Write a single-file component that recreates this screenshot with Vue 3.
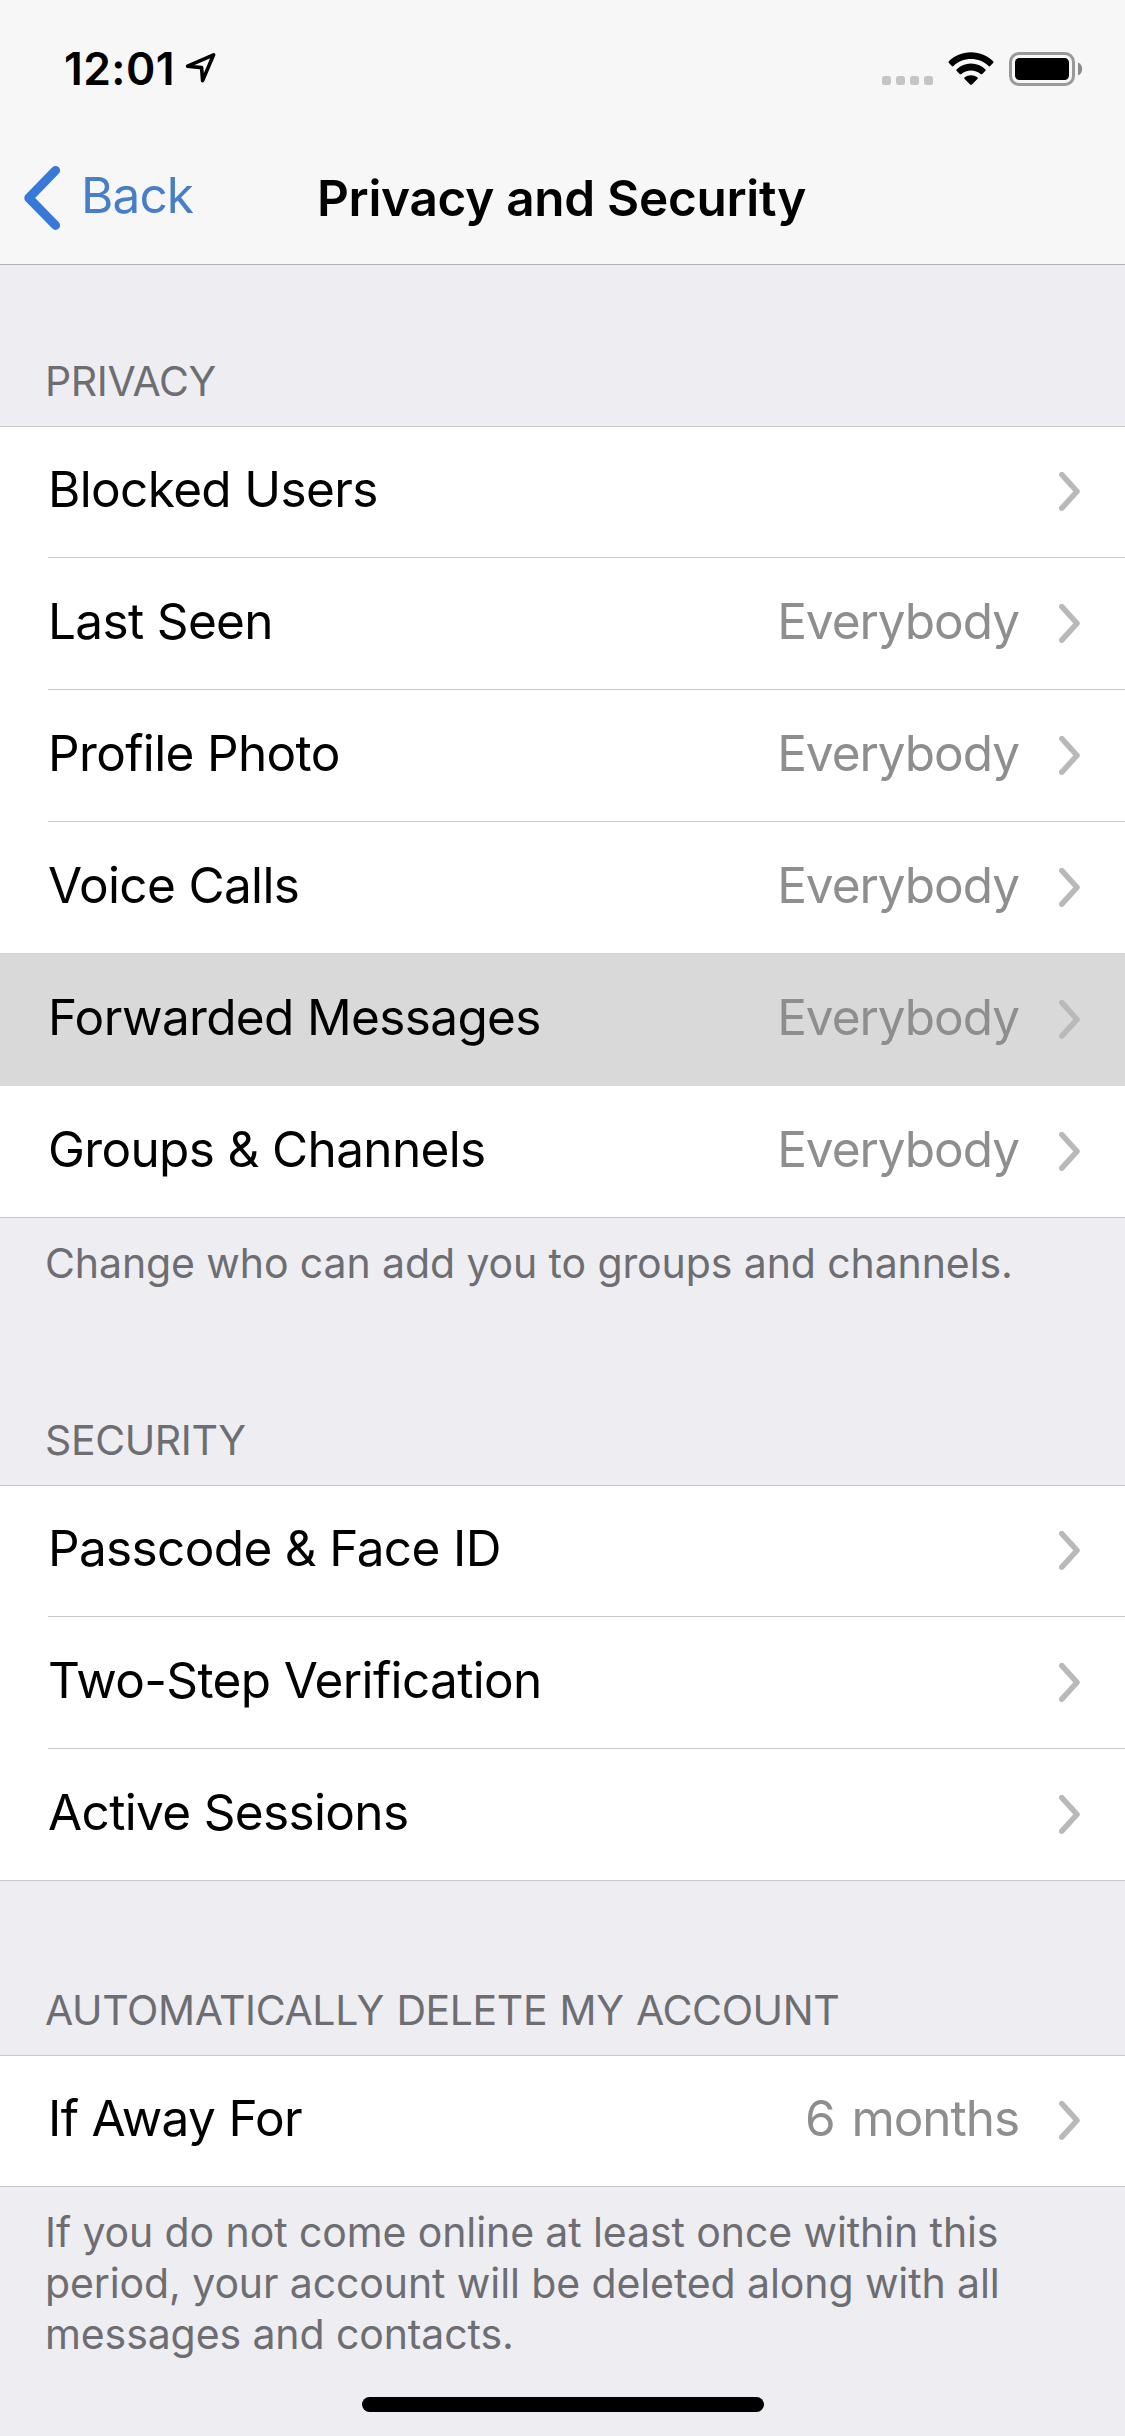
<template>
  <div class="screen">
    <header class="header">
      <div class="status-bar">
        <div class="status-left">
          <span class="time">12:01</span>
          <svg class="location-icon" width="32" height="32" viewBox="0 0 32 32">
            <path d="M2.6 14.2 28.6 2.8 17.6 28.6 16.6 15.6Z" />
          </svg>
        </div>
        <div class="status-right">
          <div class="signal">
            <span v-for="n in 4" :key="n" class="signal-dot"></span>
          </div>
          <svg class="wifi-icon" width="46" height="34" viewBox="0 0 46 34">
            <path d="M23 0.3C31.8 0.3 39.6 3.8 45.1 9.3 45.7 9.9 45.7 10.5 45.1 11.1L42.2 14C41.7 14.5 41 14.5 40.5 14 36 9.7 29.8 7.1 23 7.1S10 9.7 5.5 14C5 14.5 4.3 14.5 3.8 14L0.9 11.1C0.3 10.5 0.3 9.9 0.9 9.3 6.4 3.8 14.2 0.3 23 0.3Z" />
            <path d="M23 11.6C28.5 11.6 33.5 13.7 37.2 17.2 37.8 17.8 37.8 18.4 37.2 19L34.3 21.9C33.8 22.4 33.1 22.4 32.6 21.9 30.1 19.7 26.7 18.4 23 18.4S15.9 19.7 13.4 21.9C12.9 22.4 12.2 22.4 11.7 21.9L8.8 19C8.2 18.4 8.2 17.8 8.8 17.2 12.5 13.7 17.5 11.6 23 11.6Z" />
            <path d="M23 23.2C25.4 23.2 27.6 24 29.3 25.3 29.9 25.8 29.9 26.5 29.4 27L23.9 32.6C23.4 33.1 22.6 33.1 22.1 32.6L16.6 27C16.1 26.5 16.1 25.8 16.7 25.3 18.4 24 20.6 23.2 23 23.2Z" />
          </svg>
          <svg class="battery-icon" width="74" height="34" viewBox="0 0 74 34">
            <rect class="battery-case" x="1.5" y="1.5" width="63" height="31" rx="8.5" />
            <rect x="6" y="6" width="54" height="22" rx="4.5" />
            <path class="battery-cap" d="M69 10.6C71.6 11.6 73.2 14 73.2 17S71.6 22.4 69 23.4Z" />
          </svg>
        </div>
      </div>

      <nav class="nav-bar">
        <button class="back-btn">
          <svg width="38" height="66" viewBox="0 0 38 66">
            <path d="M32.6 5.4 5.8 33 32.6 60.4" />
          </svg>
          <span>Back</span>
        </button>
        <h1 class="title">Privacy and Security</h1>
      </nav>
    </header>

    <main class="content">
      <section v-for="section in sections" :key="section.title" class="section">
        <h2 class="section-title">{{ section.title }}</h2>
        <ul class="list">
          <li
            v-for="item in section.items"
            :key="item.label"
            class="row"
            :class="{ pressed: pressedItem === item.label }"
            @click="pressedItem = item.label"
          >
            <span class="label">{{ item.label }}</span>
            <span v-if="item.value" class="value">{{ item.value }}</span>
            <svg class="chevron" width="22" height="40" viewBox="0 0 22 40">
              <path d="M2.8 2.6 18 19.4 2.8 36.2" />
            </svg>
          </li>
        </ul>
        <p v-if="section.note" class="note">{{ section.note }}</p>
      </section>
    </main>

    <div class="home-indicator"></div>
  </div>
</template>

<script setup>
import { ref } from 'vue'

const pressedItem = ref('Forwarded Messages')

const sections = [
  {
    title: 'PRIVACY',
    items: [
      { label: 'Blocked Users' },
      { label: 'Last Seen', value: 'Everybody' },
      { label: 'Profile Photo', value: 'Everybody' },
      { label: 'Voice Calls', value: 'Everybody' },
      { label: 'Forwarded Messages', value: 'Everybody' },
      { label: 'Groups & Channels', value: 'Everybody' }
    ],
    note: 'Change who can add you to groups and channels.'
  },
  {
    title: 'SECURITY',
    items: [
      { label: 'Passcode & Face ID' },
      { label: 'Two-Step Verification' },
      { label: 'Active Sessions' }
    ]
  },
  {
    title: 'AUTOMATICALLY DELETE MY ACCOUNT',
    items: [{ label: 'If Away For', value: '6 months' }],
    note: 'If you do not come online at least once within this period, your account will be deleted along with all messages and contacts.'
  }
]
</script>

<style>
body {
  margin: 0;
  background: #eeedf2;
}
</style>

<style scoped>
.screen {
  display: flex;
  flex-direction: column;
  box-sizing: border-box;
  width: 1125px;
  height: 2436px;
  overflow: hidden;
  background: #eeedf2;
  color: #000;
  font-family: Inter, 'Liberation Sans', sans-serif;
}

.header {
  box-sizing: border-box;
  height: 265px;
  flex-shrink: 0;
  background: #f7f7f7;
  border-bottom: 1px solid #b2b2b4;
}

.status-bar {
  display: flex;
  justify-content: space-between;
  height: 132px;
  padding: 0 42px 0 64px;
}

.status-left {
  display: flex;
  align-items: flex-start;
  gap: 10px;
}

.time {
  padding-top: 40px;
  font-size: 44.5px;
  font-weight: 600;
  line-height: 58px;
  letter-spacing: 0.4px;
}

.location-icon {
  margin-top: 52px;
  fill: none;
  stroke: #000;
  stroke-width: 3.6;
  stroke-linejoin: round;
}

.status-right {
  display: flex;
  align-items: flex-start;
  padding-top: 52px;
}

.signal {
  display: flex;
  gap: 5px;
  margin-top: 24px;
}

.signal-dot {
  width: 9px;
  height: 9px;
  border-radius: 2.5px;
  background: #c5c5c5;
}

.wifi-icon {
  margin-left: 15px;
}

.battery-icon {
  margin-left: 15px;
}

.battery-case {
  fill: none;
  stroke: #999;
  stroke-width: 3;
}

.battery-cap {
  fill: #8c8c8c;
}

.nav-bar {
  display: grid;
  grid-template-columns: 1fr auto 1fr;
  align-items: start;
  height: 132px;
}

.back-btn {
  display: flex;
  align-items: flex-start;
  gap: 20px;
  padding: 33px 0 0 23px;
  border: none;
  background: none;
  color: #467fc8;
  font-family: inherit;
  font-size: 49.5px;
  line-height: 60px;
  letter-spacing: -0.9px;
  cursor: pointer;
}

.back-btn svg {
  fill: none;
  stroke: #3679d8;
  stroke-width: 9;
  stroke-linecap: round;
  stroke-linejoin: round;
}

.title {
  margin: 0;
  padding: 36px 2px 0 0;
  font-size: 49.5px;
  font-weight: 600;
  line-height: 60px;
  letter-spacing: -0.3px;
}

.section {
  display: flex;
  flex-direction: column;
}

.section + .section {
  margin-top: 13px;
}

.section-title {
  margin: 0;
  padding: 91px 45px 20px;
  color: #6d6d72;
  font-size: 41px;
  font-weight: 400;
  line-height: 50px;
  letter-spacing: -0.4px;
  word-spacing: 1.3px;
}

.list {
  margin: 0;
  padding: 0;
  list-style: none;
  background: #fff;
  box-shadow: inset 0 1px 0 #c8c7cc, inset 0 -1px 0 #c8c7cc;
}

.row {
  display: flex;
  align-items: center;
  height: 132px;
  padding: 0 44px 0 48px;
  background: linear-gradient(#c8c7cc, #c8c7cc) 48px 100% / 100% 1px no-repeat;
  cursor: pointer;
}

.row:last-child {
  background: none;
}

.row.pressed {
  background: #d9d9d9;
  box-shadow: 0 -1px 0 #d4d4d4;
}

.label {
  flex: 1;
  padding-bottom: 6px;
  font-size: 49.5px;
  line-height: 60px;
  letter-spacing: -0.65px;
}

.value {
  padding-bottom: 6px;
  color: #8e8e8e;
  font-size: 49.5px;
  line-height: 60px;
  letter-spacing: -1.05px;
  word-spacing: 4px;
}

.chevron {
  margin-left: 40px;
  fill: none;
  stroke: #b9b9bb;
  stroke-width: 5.5;
  stroke-linecap: round;
  stroke-linejoin: round;
}

.note {
  margin: 0;
  padding: 20px 45px 22px;
  color: #6d6d72;
  font-size: 41px;
  line-height: 51px;
  letter-spacing: -0.1px;
}

.home-indicator {
  width: 402px;
  height: 15px;
  margin: auto auto 24px;
  border-radius: 8px;
  background: #000;
}
</style>
